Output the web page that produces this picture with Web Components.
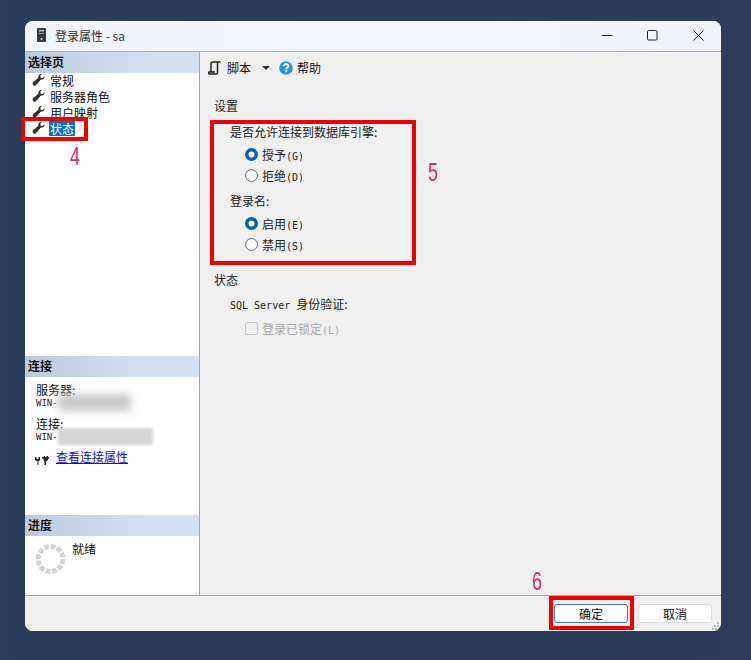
<!DOCTYPE html>
<html lang="zh">
<head>
<meta charset="utf-8">
<title>登录属性 - sa</title>
<style>
    html, body { margin: 0; height: 100%; }
    body {
        position: relative;
        box-sizing: border-box;
        height: 660px;
        padding: 21px 30px 29px 25px;
        overflow: hidden;
        background: linear-gradient(90deg, #2a3d5c 0%, #2b3a57 50%, #2c3d5b 100%);
        font: 12px "Noto Sans CJK SC", "Noto Sans", sans-serif;
        color: #111;
    }
    .mono { font: 10px "DejaVu Sans Mono", monospace; }
</style>
</head>
<body>
<login-dialog>
    <title-bar slot="title" text="登录属性 - sa"></title-bar>

    <panel-section slot="side" heading="选择页" style="height:304px">
        <page-item style="margin-top:0">常规</page-item>
        <page-item>服务器角色</page-item>
        <page-item>用户映射</page-item>
        <page-item selected>状态</page-item>
    </panel-section>
    <panel-section slot="side" heading="连接" style="height:159px">
        <conn-info label="服务器:" wide="73" soft style="margin-top:5px"></conn-info>
        <conn-info label="连接:" wide="95"></conn-info>
        <conn-link>查看连接属性</conn-link>
    </panel-section>
    <panel-section slot="side" heading="进度" style="height:80px">
        <progress-state>就绪</progress-state>
    </panel-section>

    <tool-bar slot="main"></tool-bar>
    <form-group slot="main" heading="设置" style="margin-top:16px">
        <form-line>是否允许连接到数据库引擎:</form-line>
        <radio-option checked style="margin-top:4px">授予<span class="mono">(G)</span></radio-option>
        <radio-option>拒绝<span class="mono">(D)</span></radio-option>
        <form-line style="margin-top:6px">登录名:</form-line>
        <radio-option checked style="margin-top:4px">启用<span class="mono">(E)</span></radio-option>
        <radio-option>禁用<span class="mono">(S)</span></radio-option>
    </form-group>
    <form-group slot="main" heading="状态" style="margin-top:18px;--head-gap:8px">
        <form-line><span class="mono">SQL Server </span>身份验证:</form-line>
        <lock-check>登录已锁定<span class="mono">(L)</span></lock-check>
    </form-group>

    <dialog-button slot="foot" primary>确定</dialog-button>
    <dialog-button slot="foot">取消</dialog-button>
</login-dialog>

<red-box style="left:21px;top:117px;width:67px;height:24px"></red-box>
<red-box style="left:210px;top:120px;width:206px;height:145px"></red-box>
<red-box style="left:549px;top:596px;width:85px;height:34px"></red-box>
<red-num style="left:70px;top:142px">4</red-num>
<red-num style="left:428px;top:158px">5</red-num>
<red-num style="left:532px;top:567px">6</red-num>

<script>
function shadow(el, html) {
    el.attachShadow({ mode: 'open' });
    el.shadowRoot.innerHTML = html;
}

class LoginDialog extends HTMLElement {
    connectedCallback() {
        if (this.shadowRoot) return;
        shadow(this, `
            <style>
                :host { display: flex; flex-direction: column; height: 610px; border-radius: 8px; overflow: hidden; background: #f0f0f0; }
                .body { flex: 1; display: grid; grid-template-columns: 175px 1fr; min-height: 0; }
                .side { display: flex; flex-direction: column; background: #fff; border-right: 1px solid #a6a6a6; }
                .main { display: flex; flex-direction: column; background: #f0f0f0; }
                .foot { height: 36px; box-sizing: border-box; border-top: 1px solid #a6a6a6; padding: 8px 9px 0 0;
                        display: flex; justify-content: flex-end; gap: 10px; position: relative; background: #f0f0f0; }
                svg { position: absolute; right: 1px; bottom: 1px; }
            </style>
            <slot name="title"></slot>
            <div class="body">
                <div class="side"><slot name="side"></slot></div>
                <div class="main"><slot name="main"></slot></div>
            </div>
            <div class="foot">
                <slot name="foot"></slot>
                <svg width="8" height="8" fill="#b8b8b8"><rect x="5" y="0" width="2" height="2"/><rect x="2" y="3" width="2" height="2"/><rect x="5" y="3" width="2" height="2"/><rect x="0" y="6" width="2" height="2"/><rect x="3" y="6" width="2" height="2"/><rect x="6" y="6" width="2" height="2"/></svg>
            </div>`);
    }
}

class TitleBar extends HTMLElement {
    connectedCallback() {
        if (this.shadowRoot) return;
        shadow(this, `
            <style>
                :host { display: flex; align-items: center; height: 31px; box-sizing: border-box; padding: 0 0 2px 12px;
                        background: linear-gradient(90deg, #f2f5fa, #f4f7fc 70%, #eff3f9); border-bottom: 1px solid #a9a9a9; color: #333; }
                .name { margin-left: 9px; font-size: 12px; }
                .btns { margin-left: auto; display: flex; }
                .btn { width: 45.5px; height: 28px; display: flex; align-items: center; justify-content: center; }
            </style>
            <svg width="9" height="14" viewBox="0 0 9 14"><rect width="9" height="14" rx="1" fill="#3a3a3a"/><rect x="2" y="2" width="5" height="1.500" fill="#bbb"/><rect x="2" y="5" width="5" height="1" fill="#999"/><circle cx="4.500" cy="11" r="1" fill="#ddd"/></svg>
            <span class="name">${this.getAttribute('text')}</span>
            <div class="btns">
                <div class="btn"><svg width="11" height="11"><path d="M0 5.500h10.500" stroke="#222" stroke-width="1"/></svg></div>
                <div class="btn"><svg width="11" height="11"><rect x=".5" y=".5" width="9.500" height="9.500" rx="1.200" fill="none" stroke="#222"/></svg></div>
                <div class="btn"><svg width="11" height="11"><path d="M.5.5l10 10M10.500 .5l-10 10" stroke="#222" fill="none"/></svg></div>
            </div>`);
    }
}

class PanelSection extends HTMLElement {
    connectedCallback() {
        if (this.shadowRoot) return;
        shadow(this, `
            <style>
                :host { display: block; box-sizing: border-box; }
                h2 { margin: 0; height: 21px; line-height: 20px; padding-left: 3px; font-size: 12px; font-weight: 700; color: #111;
                     background: linear-gradient(90deg, #bccade, #d4e1ef 70%, #d4e1f0); }
            </style>
            <h2>${this.getAttribute('heading')}</h2>
            <slot></slot>`);
    }
}

const WRENCH = `<svg width="13" height="12" viewBox="0 0 13 12"><path d="M12.700 2.300c.2 2.200-1.700 3.900-3.800 3.300L4.400 10.800c-.9 1-2.200 1.200-3.100.4S.4 9 1.300 8.100L6.300 3.700C5.900 1.500 7.700-.3 10 .1L8.200 2l.5 1.700 1.800.4z" fill="#333"/></svg>`;

class PageItem extends HTMLElement {
    connectedCallback() {
        if (this.shadowRoot) return;
        shadow(this, `
            <style>
                :host { display: flex; align-items: center; height: 16px; padding-left: 7px; margin-top: 0; position: relative; top: -1px; }
                span { margin-left: 5px; padding: 0; height: 15px; line-height: 15px; color: #111; }
                :host([selected]) span { background: #0b6fc4; color: #fff; margin-left: 4px; padding: 0 1px 0 1px; }
            </style>
            ${WRENCH}<span><slot></slot></span>`);
    }
}

class ConnInfo extends HTMLElement {
    connectedCallback() {
        if (this.shadowRoot) return;
        const soft = this.hasAttribute('soft');
        shadow(this, `
            <style>
                :host { display: block; padding-left: 11px; margin-top: 7px; line-height: 12px; }
                .lbl { height: 14px; line-height: 16px; }
                .row { display: flex; align-items: center; height: 13px; font: 9px "DejaVu Sans Mono", monospace; color: #222; }
                .blur { height: 17px; margin: 0; flex: none; background: ${soft ? '#c9c9c9' : '#d6d6d6'}; filter: blur(${soft ? 4 : 1.500}px); width: ${this.getAttribute('wide')}px; }
            </style>
            <div class="lbl">${this.getAttribute('label')}</div>
            <div class="row">WIN-<div class="blur"></div></div>`);
    }
}

class ConnLink extends HTMLElement {
    connectedCallback() {
        if (this.shadowRoot) return;
        shadow(this, `
            <style>
                :host { display: flex; align-items: center; gap: 7px; padding-left: 10px; margin-top: 6px; height: 18px; }
                a { color: #0a10d8; text-decoration: underline; margin-top: -3px; }
                svg { margin-top: 5px; }
            </style>
            <svg width="14" height="9" viewBox="0 0 14 9" fill="#2a2a2a"><path d="M0 1h1.500v2h2V1H5v3L3.500 5.500V9h-1V5.500L0 4z"/><path d="M7 1h1.500V0H10v1h1.500V0H13v1h1v1.500h-1V4l-2 1.500V9H9.500V5.500L8.500 4V2.500H7z"/></svg>
            <a href="#"><slot></slot></a>`);
    }
}

class ProgressState extends HTMLElement {
    connectedCallback() {
        if (this.shadowRoot) return;
        shadow(this, `
            <style>
                :host { display: flex; align-items: flex-start; padding: 6px 0 0 10px; }
                span { margin: 0 0 0 6px; line-height: 14px; }
            </style>
            <svg width="31" height="32" viewBox="0 0 31 32" style="margin-top:1px"><circle cx="15.500" cy="16" r="12.500" fill="none" stroke="#d4d4d4" stroke-width="5" stroke-dasharray="5 1.500"/></svg>
            <span><slot></slot></span>`);
    }
}

class ToolBar extends HTMLElement {
    connectedCallback() {
        if (this.shadowRoot) return;
        shadow(this, `
            <style>
                :host { display: flex; align-items: center; height: 31px; padding-left: 8px; box-sizing: border-box; }
                .t { margin-left: 6px; }
                .arrow { width: 0; height: 0; border: 4px solid transparent; border-top: 4px solid #333; border-bottom: 0; margin: 0 9px 0 11px; }
                .help { margin-right: 4px; }
            </style>
            <svg width="13" height="14" viewBox="0 0 13 14" fill="none" stroke="#222" stroke-width="1.500"><path d="M3 11V2.500C3 1.500 3.700 1 4.500 1H12.500M9.500 1v10.500c0 1-.7 1.500-1.500 1.500H1.500C.6 13 .4 11.500 1 11h6"/></svg>
            <span class="t">脚本</span>
            <span class="arrow"></span>
            <svg class="help" width="14" height="14" viewBox="0 0 14 14"><circle cx="7" cy="7" r="6.800" fill="#2f97d6"/><path d="M4.800 5.300C4.900 3.900 5.900 3.200 7.100 3.200c1.300 0 2.300.8 2.300 1.900 0 1.700-2.100 1.600-2.100 3.200" fill="none" stroke="#fff" stroke-width="1.700"/><rect x="6.300" y="9.300" width="1.800" height="1.800" fill="#fff"/></svg>
            <span><slot>帮助</slot></span>`);
    }
}

class FormGroup extends HTMLElement {
    connectedCallback() {
        if (this.shadowRoot) return;
        shadow(this, `
            <style>
                :host { display: block; padding-left: 14px; }
                h3 { margin: 0 0 var(--head-gap, 10px); font-size: 12px; font-weight: 400; line-height: 14px; color: #222; }
            </style>
            <h3>${this.getAttribute('heading')}</h3>
            <slot></slot>`);
    }
}

class FormLine extends HTMLElement {
    connectedCallback() {
        if (this.shadowRoot) return;
        shadow(this, `
            <style>:host { display: block; padding-left: 16px; height: 17px; line-height: 17px; color: #222; }</style>
            <slot></slot>`);
    }
}

class RadioOption extends HTMLElement {
    connectedCallback() {
        if (this.shadowRoot) return;
        const on = this.hasAttribute('checked');
        shadow(this, `
            <style>
                :host { display: flex; align-items: center; height: 21px; padding-left: 31px; color: #222; }
                svg { margin-right: 4px; }
            </style>
            <svg width="13" height="13" viewBox="0 0 13 13">${on
                ? '<circle cx="6.500" cy="6.500" r="6.500" fill="#0a5fb0"/><circle cx="6.500" cy="6.500" r="3" fill="#fff"/>'
                : '<circle cx="6.500" cy="6.500" r="6" fill="#fbfbfb" stroke="#6e6e6e"/>'}</svg>
            <span><slot></slot></span>`);
    }
}

class LockCheck extends HTMLElement {
    connectedCallback() {
        if (this.shadowRoot) return;
        shadow(this, `
            <style>
                :host { display: flex; align-items: center; height: 18px; margin-top: 7px; padding-left: 31px; color: #a8a8a8; }
                i { width: 11px; height: 11px; border: 1px solid #c6c6c6; border-radius: 2px; background: #efefef; margin-right: 4px; }
            </style>
            <i></i><span><slot></slot></span>`);
    }
}

class DialogButton extends HTMLElement {
    connectedCallback() {
        if (this.shadowRoot) return;
        shadow(this, `
            <style>
                :host { display: flex; align-items: center; justify-content: center; box-sizing: border-box; width: 74px; height: 19px;
                        background: #fdfdfd; border: 1px solid #dcdcdc; border-radius: 3px; color: #111; }
                :host([primary]) { border: 1.500px solid #3b7cb2; }
            </style>
            <slot></slot>`);
    }
}

// annotations drawn over the screenshot
class RedBox extends HTMLElement {
    constructor() {
        super();
        shadow(this, `<style>:host { position: absolute; box-sizing: border-box; border: 4px solid #f00000; }</style>`);
    }
}

class RedNum extends HTMLElement {
    constructor() {
        super();
        shadow(this, `
            <style>
                :host { position: absolute; font: 25px/29px "Liberation Sans", sans-serif; color: #e0245c; transform: scaleX(.72); transform-origin: left top; }
            </style>
            <slot></slot>`);
    }
}

customElements.define('login-dialog', LoginDialog);
customElements.define('title-bar', TitleBar);
customElements.define('panel-section', PanelSection);
customElements.define('page-item', PageItem);
customElements.define('conn-info', ConnInfo);
customElements.define('conn-link', ConnLink);
customElements.define('progress-state', ProgressState);
customElements.define('tool-bar', ToolBar);
customElements.define('form-group', FormGroup);
customElements.define('form-line', FormLine);
customElements.define('radio-option', RadioOption);
customElements.define('lock-check', LockCheck);
customElements.define('dialog-button', DialogButton);
customElements.define('red-box', RedBox);
customElements.define('red-num', RedNum);
</script>
</body>
</html>
